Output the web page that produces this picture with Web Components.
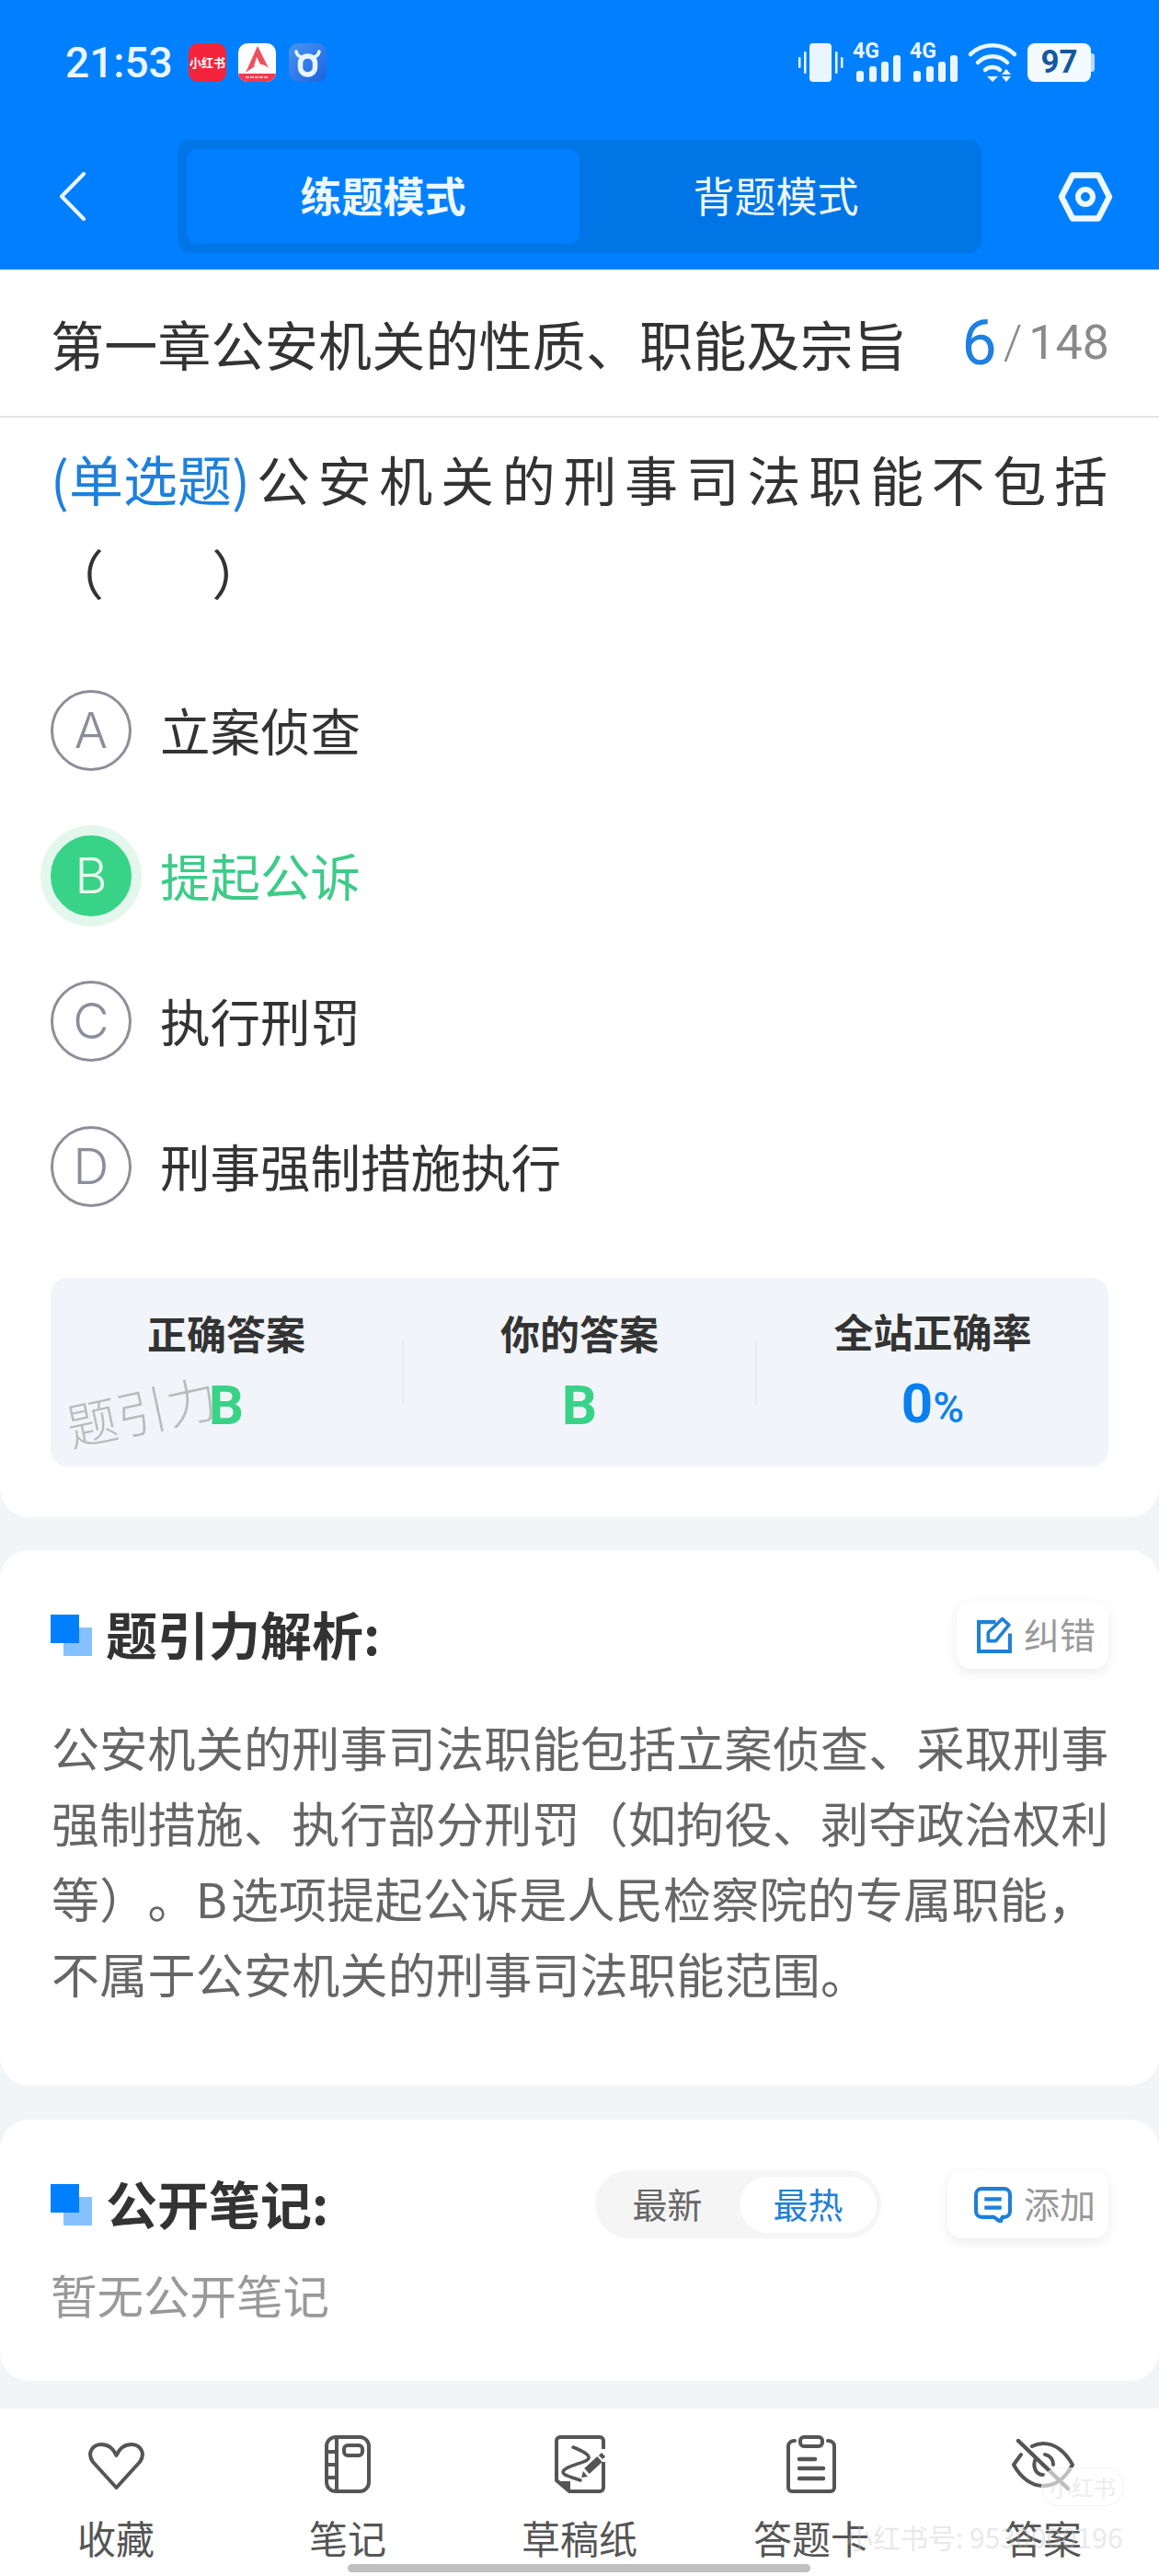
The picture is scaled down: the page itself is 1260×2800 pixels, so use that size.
<!DOCTYPE html>
<html lang="zh-CN">
<head>
<meta charset="utf-8">
<title>题引力</title>
<style>
  html, body { margin: 0; padding: 0; }
  body {
    width: 1260px;
    min-height: 2800px;
    display: flex;
    flex-direction: column;
    background: #f1f5f8;
    color: #333;
    font-family: "Noto Sans CJK SC", "Noto Sans", sans-serif;
    text-spacing-trim: space-all;
  }
</style>
</head>
<body>
  <status-bar></status-bar>
  <mode-nav></mode-nav>
  <quiz-card>
    <chapter-bar slot="top" current="6" total="148">第一章公安机关的性质、职能及宗旨</chapter-bar>
    <question-text type="(单选题)">公安机关的刑事司法职能不包括<br>（&nbsp;&nbsp;&nbsp;&nbsp;&nbsp;）</question-text>
    <quiz-option letter="A">立案侦查</quiz-option>
    <quiz-option letter="B" state="right">提起公诉</quiz-option>
    <quiz-option letter="C">执行刑罚</quiz-option>
    <quiz-option letter="D">刑事强制措施执行</quiz-option>
    <answer-panel right="B" mine="B" rate="0"></answer-panel>
  </quiz-card>
  <section-card heading="题引力解析:" gap="44" bottom="81" top="36">
    <pill-button slot="actions" icon="edit" label="纠错" width="165"></pill-button>
    <div style="width:1152px;font-size:52px;line-height:82px;letter-spacing:.25px;color:#666;margin-left:1px">公安机关的刑事司法职能包括立案侦查、采取刑事强制措施、执行部分刑罚（如拘役、剥夺政治权利等）。B&#8202;选项提起公诉是人民检察院的专属职能，不属于公安机关的刑事司法职能范围。</div>
  </section-card>
  <section-card heading="公开笔记:" gap="26" bottom="59" top="37">
    <sort-toggle slot="actions"></sort-toggle>
    <pill-button slot="actions" icon="note" label="添加" width="175"></pill-button>
    <div style="font-size:50.5px;line-height:68px;padding-bottom:2px;color:#999">暂无公开笔记</div>
  </section-card>
  <bottom-bar>
    <bar-item icon="heart">收藏</bar-item>
    <bar-item icon="book">笔记</bar-item>
    <bar-item icon="draft">草稿纸</bar-item>
    <bar-item icon="card">答题卡</bar-item>
    <bar-item icon="eye">答案</bar-item>
  </bottom-bar>

<script>
class StatusBar extends HTMLElement {
    constructor(){
        super();
        this.attachShadow({mode:'open'});
    }

    connectedCallback() {
        const signal = `
            <div class="signal">
                <b>4G</b>
                <svg width="50" height="29" viewBox="0 0 50 29" fill="#eaf6ff">
                    <rect x="1" y="17" width="8" height="12" rx="3"/>
                    <rect x="15" y="12" width="8" height="17" rx="3"/>
                    <rect x="28" y="7" width="8" height="22" rx="3"/>
                    <rect x="41" y="0" width="8" height="29" rx="3"/>
                </svg>
            </div>`;
        this.shadowRoot.innerHTML = `
            <style>
                :host{
                    display: flex;
                    align-items: center;
                    height: 136px;
                    padding: 0 70px 0 71px;
                    box-sizing: border-box;
                    background: #0080fe;
                    color: #eaf6ff;
                }
                .time{
                    font: 500 46px/1 Roboto, sans-serif;
                    width: 134px;
                }
                .app{
                    width: 41px;
                    height: 42px;
                    margin-right: 13px;
                    border-radius: 10px;
                    box-sizing: border-box;
                    overflow: hidden;
                }
                .red{
                    background: #f5243d;
                    color: #fff;
                    font: 700 13px/42px "Noto Sans CJK SC", sans-serif;
                    text-align: center;
                    white-space: nowrap;
                }
                .right{
                    margin-left: auto;
                    display: flex;
                    align-items: center;
                    height: 42px;
                }
                .signal{
                    position: relative;
                    width: 50px;
                    height: 42px;
                    margin-right: 12px;
                }
                .signal b{
                    position: absolute;
                    left: -2px;
                    top: -3px;
                    font: 700 23px/24px "Roboto", sans-serif;
                }
                .signal svg{
                    position: absolute;
                    left: 1px;
                    bottom: 0;
                }
                .battery{
                    display: flex;
                    align-items: center;
                    margin-left: 12px;
                }
                .battery span{
                    width: 69px;
                    height: 42px;
                    border-radius: 8px;
                    background: #f4fbff;
                    color: #14599f;
                    font: 700 35px/42px Roboto, sans-serif;
                    text-align: center;
                }
                .battery i{
                    width: 4px;
                    height: 20px;
                    background: #bcd8f3;
                    border-radius: 0 3px 3px 0;
                }
            </style>
            <div class="time">21:53</div>
            <div class="app red">小红书</div>
            <svg class="app" viewBox="0 0 41 42" style="margin-right:14px">
                <rect width="41" height="42" fill="#fdfdfd"/>
                <path d="M0 33H41V42H0Z" fill="#ef3b4d"/>
                <path d="M21 3L33 27C29 23 24 22 20 24C16 26 12 29 8 32Z" fill="#ef5060"/>
                <path d="M20 15L24 23L17 25Z" fill="#fdfdfd"/>
                <path d="M8 37H33" stroke="#f8b4bb" stroke-width="2" stroke-dasharray="4 1"/>
            </svg>
            <svg class="app" viewBox="0 0 41 42">
                <defs><linearGradient id="bull" x1="0" y1="0" x2="1" y2="1">
                    <stop offset="0" stop-color="#4a93f2"/><stop offset="1" stop-color="#1c63e0"/>
                </linearGradient></defs>
                <rect width="41" height="42" fill="url(#bull)"/>
                <rect x="12.5" y="14" width="16" height="20" rx="7.5" fill="none" stroke="#e6f5ff" stroke-width="5.5"/>
                <path d="M8 9C9 13 12 15 15 15M33 9C32 13 29 15 26 15" fill="none" stroke="#e6f5ff" stroke-width="3.5" stroke-linecap="round"/>
            </svg>
            <div class="right">
                <svg width="49" height="42" viewBox="0 0 49 42" style="margin-right:12px" fill="#eaf6ff">
                    <rect x="12" y="0" width="24" height="42" rx="4"/>
                    <rect x="0" y="15" width="2.5" height="12" rx="1"/>
                    <rect x="6" y="9" width="2.5" height="24" rx="1"/>
                    <rect x="40" y="9" width="2.5" height="24" rx="1"/>
                    <rect x="46" y="15" width="2.5" height="12" rx="1"/>
                </svg>
                ${signal}${signal}
                <svg width="52" height="42" viewBox="0 0 52 42" fill="none" stroke="#eaf6ff" stroke-width="4.5" stroke-linecap="round">
                    <path d="M2 12C16 -1 36 -1 50 12"/>
                    <path d="M10 21C19 12 33 12 42 21"/>
                    <path d="M18 29C22 25 30 25 34 29"/>
                    <path d="M20 36H32L26 42Z" fill="#eaf6ff" stroke="none"/>
                    <path d="M41 28L46 34H36ZM36 36H46L41 42Z" fill="#eaf6ff" stroke="none"/>
                </svg>
                <div class="battery"><span>97</span><i></i></div>
            </div>
        `;
    }
}
customElements.define('status-bar', StatusBar);

class ModeNav extends HTMLElement {
    constructor(){
        super();
        this.attachShadow({mode:'open'});
    }

    connectedCallback() {
        this.shadowRoot.innerHTML = `
            <style>
                :host{
                    display: flex;
                    align-items: center;
                    height: 157px;
                    padding: 0 50px 2px 64px;
                    box-sizing: border-box;
                    background: #0080fe;
                }
                .back{
                    width: 129px;
                    display: flex;
                }
                .seg{
                    display: flex;
                    width: 874px;
                    height: 123px;
                    padding: 10px;
                    box-sizing: border-box;
                    background: #0075e6;
                    border-radius: 14px;
                }
                .seg div{
                    flex: 1;
                    display: flex;
                    align-items: center;
                    justify-content: center;
                    padding-bottom: 4px;
                    color: #eef8ff;
                    font-size: 45px;
                    border-radius: 12px;
                }
                .seg .on{
                    background: #0080fe;
                    font-weight: 700;
                }
                .gear{
                    margin-left: auto;
                    display: flex;
                }
            </style>
            <div class="back">
                <svg width="29" height="53" viewBox="0 0 29 53" fill="none" stroke="#eef8ff" stroke-width="4" stroke-linecap="round" stroke-linejoin="round">
                    <path d="M27 2L3 26.5L27 51"/>
                </svg>
            </div>
            <div class="seg">
                <div class="on">练题模式</div>
                <div>背题模式</div>
            </div>
            <div class="gear">
                <svg width="60" height="54" viewBox="0 0 60 54" fill="none" stroke="#eef8ff">
                    <path d="M16 3.5H44L56 27L44 50.5H16L4 27Z" stroke-width="6.5" stroke-linejoin="round"/>
                    <circle cx="30" cy="27" r="8" stroke-width="6"/>
                </svg>
            </div>
        `;
    }
}
customElements.define('mode-nav', ModeNav);

class QuizCard extends HTMLElement {
    constructor(){
        super();
        this.attachShadow({mode:'open'});
    }

    connectedCallback() {
        this.shadowRoot.innerHTML = `
            <style>
                :host{
                    display: block;
                    background: #fff;
                    border-radius: 0 0 32px 32px;
                    padding-bottom: 55px;
                }
                .body{
                    padding: 0 55px;
                }
            </style>
            <slot name="top"></slot>
            <div class="body"><slot></slot></div>
        `;
    }
}
customElements.define('quiz-card', QuizCard);

class ChapterBar extends HTMLElement {
    constructor(){
        super();
        this.attachShadow({mode:'open'});
    }

    connectedCallback() {
        this.shadowRoot.innerHTML = `
            <style>
                :host{
                    display: flex;
                    align-items: center;
                    justify-content: space-between;
                    height: 161px;
                    padding: 0 54px 0 55px;
                    box-sizing: border-box;
                    border-bottom: 2px solid #e4e4e4;
                    font-size: 58px;
                    letter-spacing: .2px;
                    color: #333;
                }
                .count{
                    display: flex;
                    align-items: center;
                    font-family: Roboto, sans-serif;
                    font-size: 52px;
                    letter-spacing: 0;
                    color: #8a8a8a;
                }
                .count b{
                    font-weight: 400;
                    font-size: 68px;
                    color: #1e80e0;
                    margin-right: 7px;
                }
                .count i{
                    font-style: normal;
                    font-weight: 300;
                    margin-right: 7px;
                }
            </style>
            <div><slot></slot></div>
            <div class="count"><b>${this.getAttribute('current')}</b><i>/</i>${this.getAttribute('total')}</div>
        `;
    }
}
customElements.define('chapter-bar', ChapterBar);

class QuestionText extends HTMLElement {
    constructor(){
        super();
        this.attachShadow({mode:'open'});
    }

    connectedCallback() {
        this.shadowRoot.innerHTML = `
            <style>
                :host{
                    display: block;
                    margin: 15px 0 42px 0;
                    font-size: 58px;
                    line-height: 102px;
                    letter-spacing: 8.7px;
                    white-space: nowrap;
                    color: #333;
                }
                span{
                    color: #1e80dc;
                    font-size: 59px;
                    letter-spacing: 0;
                    margin-right: 7px;
                }
            </style>
            <span>${this.getAttribute('type')}</span><slot></slot>
        `;
    }
}
customElements.define('question-text', QuestionText);

class QuizOption extends HTMLElement {
    constructor(){
        super();
        this.attachShadow({mode:'open'});
    }

    connectedCallback() {
        this.shadowRoot.innerHTML = `
            <style>
                :host{
                    display: flex;
                    align-items: center;
                    gap: 31px;
                    height: 158px;
                    font-size: 54.5px;
                    color: #333;
                }
                :host([state="right"]){
                    color: #3dcb88;
                }
                .txt{
                    padding-bottom: 4px;
                }
                .mark{
                    width: 88px;
                    height: 88px;
                    box-sizing: border-box;
                    border: 3px solid #8e8e9a;
                    border-radius: 50%;
                    display: flex;
                    align-items: center;
                    justify-content: center;
                    font: 300 54px/1 Inter, sans-serif;
                    color: #8c8c9c;
                }
                :host([state="right"]) .mark{
                    background: #38d387;
                    border-color: #38d387;
                    color: #e8fbf1;
                    box-shadow: 0 0 0 11px #e3f7ed;
                }
            </style>
            <div class="mark">${this.getAttribute('letter')}</div>
            <div class="txt"><slot></slot></div>
        `;
    }
}
customElements.define('quiz-option', QuizOption);

class AnswerPanel extends HTMLElement {
    constructor(){
        super();
        this.attachShadow({mode:'open'});
    }

    cell(label, value, cls){
        return `<div class="cell"><div class="label">${label}</div><div class="val ${cls}">${value}</div></div>`;
    }

    connectedCallback() {
        this.shadowRoot.innerHTML = `
            <style>
                :host{
                    display: flex;
                    position: relative;
                    align-items: center;
                    height: 205px;
                    margin-top: 42px;
                    background: #f1f5f9;
                    border-radius: 18px;
                }
                .cell{
                    flex: 1;
                    text-align: center;
                }
                .label{
                    font-size: 43px;
                    font-weight: 700;
                    line-height: 48px;
                    color: #333;
                }
                .val{
                    margin-top: 24px;
                    font: 700 60px/64px Roboto, sans-serif;
                    color: #38d387;
                }
                .val.blue{
                    color: #0a80ee;
                }
                .val small{
                    font-size: 46px;
                    font-weight: 500;
                }
                .line{
                    width: 2px;
                    height: 71px;
                    background: #e8ecf0;
                }
                .mark{
                    position: absolute;
                    left: 16px;
                    top: 113px;
                    font-size: 55px;
                    line-height: 60px;
                    font-weight: 300;
                    color: #bbb;
                    transform: rotate(-12deg);
                    white-space: nowrap;
                }
            </style>
            ${this.cell('正确答案', this.getAttribute('right'), '')}
            <div class="line"></div>
            ${this.cell('你的答案', this.getAttribute('mine'), '')}
            <div class="line"></div>
            ${this.cell('全站正确率', `${this.getAttribute('rate')}<small>%</small>`, 'blue')}
            <div class="mark">题引力</div>
        `;
    }
}
customElements.define('answer-panel', AnswerPanel);

class SectionCard extends HTMLElement {
    constructor(){
        super();
        this.attachShadow({mode:'open'});
    }

    connectedCallback() {
        this.shadowRoot.innerHTML = `
            <style>
                :host{
                    display: block;
                    margin-top: ${this.getAttribute('top')}px;
                    padding: 55px 55px ${this.getAttribute('bottom')}px;
                    background: #fff;
                    border-radius: 32px;
                }
                .head{
                    display: flex;
                    align-items: center;
                    height: 74px;
                    margin-bottom: ${this.getAttribute('gap')}px;
                }
                h2{
                    margin: 0 0 0 15px;
                    padding-bottom: 5px;
                    font-size: 56px;
                    font-weight: 700;
                    line-height: 69px;
                    color: #333;
                }
                .actions{
                    margin-left: auto;
                    display: flex;
                    align-items: center;
                }
            </style>
            <div class="head">
                <svg width="45" height="45" viewBox="0 0 45 45">
                    <rect x="14" y="14" width="31" height="31" fill="#86c1ff"/>
                    <rect width="31" height="31" fill="#0080fe"/>
                </svg>
                <h2>${this.getAttribute('heading')}</h2>
                <div class="actions"><slot name="actions"></slot></div>
            </div>
            <slot></slot>
        `;
    }
}
customElements.define('section-card', SectionCard);

class PillButton extends HTMLElement {
    constructor(){
        super();
        this.attachShadow({mode:'open'});
    }

    connectedCallback() {
        const icons = {
            edit: `<svg width="38" height="40" viewBox="0 0 37 39" fill="none" stroke="#1e80d8" stroke-width="4">
                    <path d="M20 6H2V37H35V18"/>
                    <path d="M12 26V17L27 2.5L34 9L20 26Z" stroke-width="3.5" stroke-linejoin="round"/>
                </svg>`,
            note: `<svg width="41" height="39" viewBox="0 0 40 38" fill="none" stroke="#1e80d8" stroke-width="4" stroke-linejoin="round">
                    <path d="M8 2H32a6 6 0 0 1 6 6V26a6 6 0 0 1-6 6H30L28 37L21 32H8a6 6 0 0 1-6-6V8a6 6 0 0 1 6-6Z"/>
                    <path d="M11 13H29M11 22H29"/>
                </svg>`
        };
        this.shadowRoot.innerHTML = `
            <style>
                :host{
                    display: flex;
                    align-items: center;
                    justify-content: flex-end;
                    gap: 13px;
                    width: ${this.getAttribute('width')}px;
                    height: 74px;
                    padding-right: 14px;
                    box-sizing: border-box;
                    background: #fff;
                    border-radius: 16px;
                    box-shadow: 0 4px 14px rgba(0,0,0,.08);
                    font-size: 39px;
                    color: #999;
                }
                span{
                    padding-bottom: 4px;
                }
            </style>
            ${icons[this.getAttribute('icon')]}
            <span>${this.getAttribute('label')}</span>
        `;
    }
}
customElements.define('pill-button', PillButton);

class SortToggle extends HTMLElement {
    constructor(){
        super();
        this.attachShadow({mode:'open'});
    }

    connectedCallback() {
        this.shadowRoot.innerHTML = `
            <style>
                :host{
                    display: flex;
                    align-items: center;
                    width: 311px;
                    height: 74px;
                    margin-right: 72px;
                    box-sizing: border-box;
                    background: #f5f5f5;
                    border-radius: 37px;
                    font-size: 38px;
                    color: #666;
                }
                div{
                    display: flex;
                    align-items: center;
                    justify-content: center;
                    height: 61px;
                    box-sizing: border-box;
                    padding-bottom: 3px;
                }
                .new{
                    width: 157px;
                }
                .hot{
                    width: 149px;
                    background: #fff;
                    border-radius: 31px;
                    color: #1e80d8;
                }
            </style>
            <div class="new">最新</div>
            <div class="hot">最热</div>
        `;
    }
}
customElements.define('sort-toggle', SortToggle);

class BottomBar extends HTMLElement {
    constructor(){
        super();
        this.attachShadow({mode:'open'});
    }

    connectedCallback() {
        this.shadowRoot.innerHTML = `
            <style>
                :host{
                    display: flex;
                    position: relative;
                    margin-top: auto;
                    height: 182px;
                    box-sizing: border-box;
                    padding-top: 28px;
                    background: #fff;
                }
                .home{
                    position: absolute;
                    left: 378px;
                    top: 169px;
                    width: 503px;
                    height: 9px;
                    background: #c0c0c0;
                    border-radius: 5px;
                }
                .stamp{
                    position: absolute;
                    left: 1132px;
                    top: 64px;
                    width: 88px;
                    height: 40px;
                    border: 1px solid rgba(225,225,225,.4);
                    border-radius: 20px;
                    background: rgba(255,255,255,.62);
                    color: rgba(205,205,205,.4);
                    font-size: 24px;
                    line-height: 40px;
                    text-align: center;
                }
                .id{
                    position: absolute;
                    left: 919px;
                    top: 122px;
                    font-size: 30px;
                    line-height: 34px;
                    color: rgba(190,190,190,.35);
                    white-space: nowrap;
                }
            </style>
            <slot></slot>
            <div class="stamp">小红书</div>
            <div class="id">小红书号: 9530000196</div>
            <div class="home"></div>
        `;
    }
}
customElements.define('bottom-bar', BottomBar);

class BarItem extends HTMLElement {
    constructor(){
        super();
        this.attachShadow({mode:'open'});
    }

    connectedCallback() {
        const icons = {
            heart: `<svg width="63" height="54" viewBox="0 0 63 54" style="margin-top:6px">
                    <path d="M31.5 50L6 22C-1 12 6 3 15 3C23 3 28 7 31.5 15C35 7 40 3 48 3C57 3 64 12 57 22Z" stroke-linejoin="round"/>
                </svg>`,
            book: `<svg width="50" height="63" viewBox="0 0 50 63">
                    <rect x="2" y="2" width="46" height="59" rx="10"/>
                    <path d="M13 2V61M2 18H13M2 32H13M2 46H13"/>
                    <rect x="21" y="11" width="20" height="11" rx="4"/>
                </svg>`,
            draft: `<svg width="55" height="63" viewBox="0 0 55 63">
                    <path d="M53 15V6a4 4 0 0 0-4-4H6a4 4 0 0 0-4 4V49L16 61H49a4 4 0 0 0 4-4V29"/>
                    <path d="M20 13C28 16 38 21 37 25C36 30 10 33 9 40C9 44 20 46 28 49" stroke-width="3.5" stroke-linecap="round"/>
                    <path d="M3 50H17V61Z" fill="#555" stroke="none"/>
                    <path d="M35 39L49 26" stroke-width="8"/>
                    <path d="M29 46L36 45L31 39Z" fill="#555" stroke="none"/>
                    <path d="M50 24L53 21" stroke-width="6"/>
                </svg>`,
            card: `<svg width="54" height="63" viewBox="0 0 54 63" stroke-linecap="round">
                    <path d="M9 6C5 6 2 8 2 12V57a4 4 0 0 0 4 4H48a4 4 0 0 0 4-4V12C52 8 49 6 45 6"/>
                    <rect x="15" y="2" width="24" height="10" rx="4"/>
                    <path d="M14 26H31M14 36H40M14 47H40" stroke-width="4.5"/>
                </svg>`,
            eye: `<svg width="68" height="56" viewBox="0 0 68 56" stroke-linecap="round" style="margin-top:2px">
                    <path d="M10 17L2 28C10 43 22 51 34 51C47 51 58 43 66 28C58 14 47 5 34 5C30 5 26 6 22 8"/>
                    <path d="M26 21C22 30 26 39 34 39M36 17C41 18 45 22 45 28"/>
                    <path d="M7 2L61 54" stroke-width="4.5"/>
                </svg>`
        };
        this.shadowRoot.innerHTML = `
            <style>
                :host{
                    flex: 1;
                    display: flex;
                    flex-direction: column;
                    align-items: center;
                    font-size: 42px;
                    line-height: 48px;
                    color: #555;
                }
                .ico{
                    height: 64px;
                    margin-bottom: 24px;
                    display: flex;
                    align-items: center;
                }
                svg{
                    fill: none;
                    stroke: #555;
                    stroke-width: 4;
                }
            </style>
            <div class="ico">${icons[this.getAttribute('icon')]}</div>
            <div><slot></slot></div>
        `;
    }
}
customElements.define('bar-item', BarItem);
</script>
</body>
</html>
